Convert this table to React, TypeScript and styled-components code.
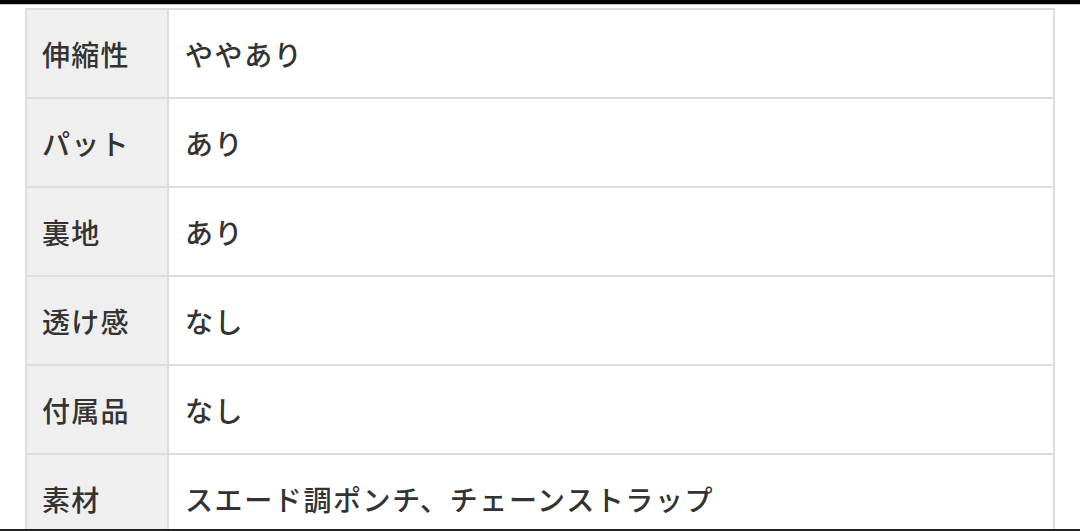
import styled, { createGlobalStyle } from 'styled-components';

const GlobalStyle = createGlobalStyle`
  html, body {
    margin: 0;
    padding: 0;
    background: #ffffff;
  }
  body {
    font-family: "Noto Sans CJK JP", "Noto Sans", sans-serif;
    color: #333333;
  }
`;

const Page = styled.div`
  width: 1080px;
  height: 531px;
  overflow: hidden;
  display: flex;
  flex-direction: column;
`;

const TopBar = styled.div`
  height: 4px;
  background: #050505;
  border-bottom: 1px solid #c8c8c8;
  flex-shrink: 0;
`;

const Content = styled.div`
  flex: 1;
  padding: 3px 0 0 25px;
  overflow: hidden;
`;

const BottomBar = styled.div`
  height: 2px;
  background: #222222;
  flex-shrink: 0;
`;

const SpecTable = styled.table`
  width: 1030px;
  border-collapse: collapse;
  border: 2px solid #dddddd;
`;

const Row = styled.tr`
  height: 89px;
`;

const HeadCell = styled.th`
  width: 110px;
  padding: 0 15px;
  background: #efefef;
  border: 2px solid #dddddd;
  text-align: left;
  font-weight: 500;
  font-size: 28px;
  letter-spacing: 1.2px;
  white-space: nowrap;
`;

const ValueCell = styled.td`
  padding: 0 16px;
  background: #ffffff;
  border: 2px solid #dddddd;
  font-weight: 500;
  font-size: 28px;
  letter-spacing: 1.6px;
  white-space: nowrap;
`;

const specs = [
  { label: '伸縮性', value: 'ややあり' },
  { label: 'パット', value: 'あり' },
  { label: '裏地', value: 'あり' },
  { label: '透け感', value: 'なし' },
  { label: '付属品', value: 'なし' },
  { label: '素材', value: 'スエード調ポンチ、チェーンストラップ' },
];

export default function App() {
  return (
    <>
      <GlobalStyle />
      <Page>
        <TopBar />
        <Content>
          <SpecTable>
            <tbody>
              {specs.map((s) => (
                <Row key={s.label}>
                  <HeadCell>{s.label}</HeadCell>
                  <ValueCell>{s.value}</ValueCell>
                </Row>
              ))}
            </tbody>
          </SpecTable>
        </Content>
        <BottomBar />
      </Page>
    </>
  );
}
